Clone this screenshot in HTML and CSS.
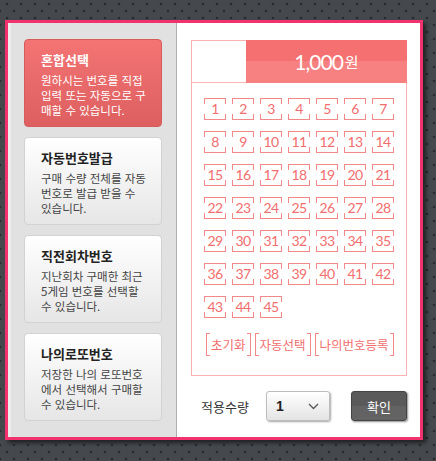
FILE: index.html
```html
<!DOCTYPE html>
<html lang="ko">
<head>
<meta charset="UTF-8">
<title>로또 구매</title>
<link rel="stylesheet" href="styles.css">
</head>
<body>
<div class="frame">
  <div class="modes">
    <div class="mode active">
      <strong>혼합선택</strong>
      <p>원하시는 번호를 직접<br>입력 또는 자동으로 구<br>매할 수 있습니다.</p>
    </div>
    <div class="mode">
      <strong>자동번호발급</strong>
      <p>구매 수량 전체를 자동<br>번호로 발급 받을 수<br>있습니다.</p>
    </div>
    <div class="mode">
      <strong>직전회차번호</strong>
      <p>지난회차 구매한 최근<br>5게임 번호를 선택할<br>수 있습니다.</p>
    </div>
    <div class="mode">
      <strong>나의로또번호</strong>
      <p>저장한 나의 로또번호<br>에서 선택해서 구매할<br>수 있습니다.</p>
    </div>
  </div>

  <div class="picker">
    <div class="board">
      <div class="price"><span class="price-val">1,000<small>원</small></span></div>
      <div class="nums">
        <span class="num">1</span><span class="num">2</span><span class="num">3</span><span class="num">4</span><span class="num">5</span><span class="num">6</span><span class="num">7</span>
        <span class="num">8</span><span class="num">9</span><span class="num">10</span><span class="num">11</span><span class="num">12</span><span class="num">13</span><span class="num">14</span>
        <span class="num">15</span><span class="num">16</span><span class="num">17</span><span class="num">18</span><span class="num">19</span><span class="num">20</span><span class="num">21</span>
        <span class="num">22</span><span class="num">23</span><span class="num">24</span><span class="num">25</span><span class="num">26</span><span class="num">27</span><span class="num">28</span>
        <span class="num">29</span><span class="num">30</span><span class="num">31</span><span class="num">32</span><span class="num">33</span><span class="num">34</span><span class="num">35</span>
        <span class="num">36</span><span class="num">37</span><span class="num">38</span><span class="num">39</span><span class="num">40</span><span class="num">41</span><span class="num">42</span>
        <span class="num">43</span><span class="num">44</span><span class="num">45</span>
      </div>
      <div class="tools">
        <span class="tool">초기화</span>
        <span class="tool">자동선택</span>
        <span class="tool">나의번호등록</span>
      </div>
    </div>

    <div class="qty">
      <span class="qty-label">적용수량</span>
      <div class="select">
        <b>1</b>
        <svg width="11" height="7" viewBox="0 0 11 7"><path d="M1 1l4.5 4.5L10 1" fill="none" stroke="#555" stroke-width="1.3"/></svg>
      </div>
      <button class="ok">확인</button>
    </div>
  </div>
</div>
</body>
</html>
```

FILE: styles.css
```css
body {
  margin: 0;
  background-color: #45484c;
  background-image:
    radial-gradient(circle, #2a2c2f 1px, transparent 1.7px),
    radial-gradient(circle, #2a2c2f 1px, transparent 1.7px);
  background-size: 14px 14px;
  background-position: 0 -3px, 7px 4px;
  font-family: "Noto Sans CJK KR", "Noto Sans", sans-serif;
  height: 461px;
}
.frame {
  margin: 20px 0 0 5px;
  width: 418px;
  height: 420px;
  box-sizing: border-box;
  border: 3px solid #f2326f;
  box-shadow: 3px 3px 4px rgba(0, 0, 0, 0.55);
  display: flex;
  background: #fff;
}
.modes {
  width: 169px;
  box-sizing: border-box;
  background: #e1e1e1;
  border-right: 1px solid #aeaeae;
  box-shadow: inset 3px 0 0 #ececec;
  padding: 16px 0 0 16px;
}
.mode {
  width: 138px;
  height: 88px;
  box-sizing: border-box;
  margin-bottom: 10px;
  padding: 11px 8px 0 16px;
  border: 1px solid #d2d2d2;
  border-radius: 4px;
  background: linear-gradient(#ffffff, #e6e6e6);
  color: #222;
}
.mode strong {
  display: block;
  font-size: 13px;
  line-height: 18px;
  font-weight: bold;
}
.mode p {
  margin: 4px 0 0;
  font-size: 11.5px;
  line-height: 15px;
  color: #444;
  white-space: nowrap;
}
.mode.active {
  background: linear-gradient(#f47474, #dd5f5f);
  border-color: #d65c5c;
  color: #fff;
}
.mode.active p {
  color: #fff;
}
.picker {
  flex: 1;
  padding: 17px 0 0 14px;
}
.board {
  width: 216px;
  box-sizing: border-box;
  border: 1px solid #f9b3b3;
}
.price {
  display: flex;
  justify-content: flex-end;
  height: 41px;
  border-bottom: 1px solid #f9b3b3;
}
.price-val {
  width: 161px;
  margin: -1px -1px -1px 0;
  background: linear-gradient(#f57070 50%, #f78181 50%);
  color: #fff;
  display: flex;
  align-items: center;
  justify-content: center;
  font-family: Lato, "Noto Sans CJK KR", sans-serif;
  font-size: 21px;
  letter-spacing: -1px;
}
.price-val small {
  font-family: "Noto Sans CJK KR", sans-serif;
  font-size: 15px;
  letter-spacing: 0;
  margin-left: 2px;
}
.nums {
  display: grid;
  grid-template-columns: repeat(7, 22px);
  column-gap: 6px;
  row-gap: 11px;
  padding: 15px 0 0 12px;
}
.num {
  position: relative;
  height: 22px;
  box-sizing: border-box;
  border: 1px solid #f28888;
  color: #f26e6e;
  font-family: Lato, sans-serif;
  font-size: 14px;
  line-height: 20px;
  letter-spacing: -0.5px;
  text-align: center;
}
.num::before {
  content: "";
  position: absolute;
  top: 5px;
  bottom: 5px;
  left: -1px;
  right: -1px;
  border-left: 1px solid #fff;
  border-right: 1px solid #fff;
}
.tools {
  display: flex;
  gap: 4px;
  margin: 15px 0 0 14px;
  padding-bottom: 19px;
}
.tool {
  position: relative;
  height: 23px;
  box-sizing: border-box;
  border: 1px solid #f28888;
  padding: 0 4px;
  color: #f26e6e;
  font-size: 12.5px;
  line-height: 21px;
}
.tool::before {
  content: "";
  position: absolute;
  left: 3px;
  right: 3px;
  top: -1px;
  bottom: -1px;
  border-top: 1px solid #fff;
  border-bottom: 1px solid #fff;
}
.qty {
  display: flex;
  align-items: center;
  height: 30px;
  margin-top: 15px;
}
.qty-label {
  margin-left: 10px;
  width: 65px;
  font-size: 13px;
  color: #333;
}
.select {
  width: 64px;
  height: 30px;
  box-sizing: border-box;
  border: 1px solid #bdbdbd;
  border-radius: 3px;
  background: linear-gradient(#ffffff, #e4e4e4);
  box-shadow: 1px 1px 2px rgba(0, 0, 0, 0.35);
  display: flex;
  align-items: center;
  justify-content: space-between;
  padding: 0 10px 0 9px;
}
.select b {
  font-family: "Liberation Sans", sans-serif;
  font-size: 14px;
  color: #222;
}
.ok {
  margin-left: 21px;
  width: 56px;
  height: 30px;
  border: 1px solid #444;
  border-radius: 3px;
  background: linear-gradient(#5a5a5a 50%, #636363 50%);
  box-shadow: 1px 1px 2px rgba(0, 0, 0, 0.45);
  color: #fff;
  font-family: "Noto Sans CJK KR", sans-serif;
  font-size: 13px;
  padding: 0;
}
```
